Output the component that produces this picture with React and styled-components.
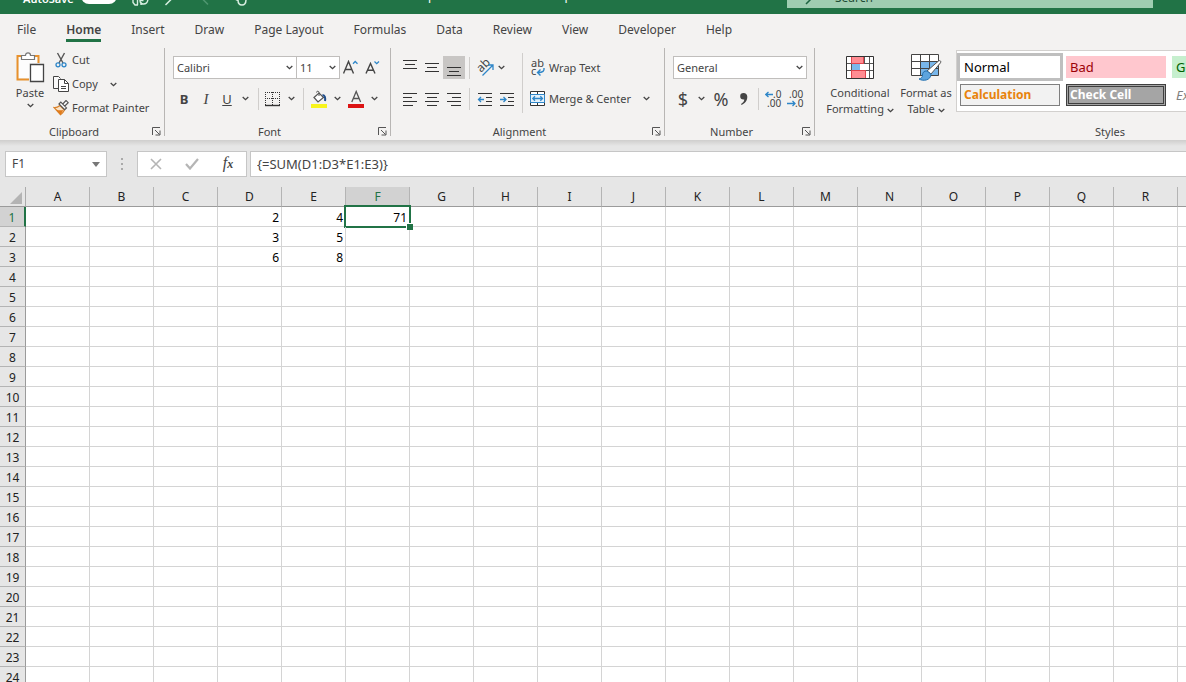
import React from "react";
import styled, { createGlobalStyle, css } from "styled-components";

const tabs = ["File", "Home", "Insert", "Draw", "Page Layout", "Formulas", "Data", "Review", "View", "Developer", "Help"];
const columns = "ABCDEFGHIJKLMNOPQRS".split("");
const rows = Array.from({ length: 24 }, (_, i) => i + 1);
const cells = { D1: 2, E1: 4, F1: 71, D2: 3, E2: 5, D3: 6, E3: 8 };
const active = { col: "F", row: 1 };

const Chevron = () => (
    <ChevronSvg width="7" height="5" viewBox="0 0 7 5">
        <path d="M.7 1l2.800 2.700L6.300 1" fill="none" stroke="#444" strokeWidth="1.300" />
    </ChevronSvg>
)

const PasteIcon = () => (
    <svg width="30" height="32" viewBox="0 0 30 32" fill="none">
        <path d="M8 5H2.5v23.500H14M18 5h5.500v7" stroke="#e8912d" strokeWidth="2" />
        <path d="M4 6.500h18V12H14v15H4z" fill="#fdfdfd" />
        <path d="M6.500 8.500v-4h4C10.500 1 15.500 1 15.500 4.500h4v4z" fill="#fff" stroke="#777" strokeWidth="1.200" />
        <path d="M15.500 13.500h13v17h-13z" fill="#fff" stroke="#444" strokeWidth="1.300" />
    </svg>
)

const CutIcon = () => (
    <svg width="16" height="16" viewBox="0 0 16 16" fill="none">
        <path d="M4.500 1l5.500 10M11.500 1L6 11" stroke="#555" strokeWidth="1.400" />
        <circle cx="5" cy="12.800" r="2" stroke="#2e86c8" strokeWidth="1.300" />
        <circle cx="11" cy="12.800" r="2" stroke="#2e86c8" strokeWidth="1.300" />
    </svg>
)

const CopyIcon = () => (
    <svg width="16" height="16" viewBox="0 0 16 16" fill="#fff" stroke="#444">
        <path d="M5 12.500H.5V.5h5l2 2" fill="#fafafa" />
        <path d="M5.500 3.500h6l4 4v8h-10z" />
        <path d="M11.500 3.500v4h4M8 10.500h5M8 12.500h5" fill="none" />
    </svg>
)

const PainterIcon = () => (
    <svg width="16" height="16" viewBox="0 0 16 16" fill="none">
        <path d="M1 7.500c2 .3 4-.5 6-2l4.500 4.500c-1 2-2 3.500-4 4.700z" fill="#fbe3c5" stroke="#d9822b" strokeWidth="1.200" />
        <path d="M3 9.500c3 1 5.500 1 7.500.5l-3 4.700z" fill="#e07b1c" />
        <path d="M6 4l1.800-1.800 5.700 5.700-1.800 1.800zM9.800 4l3.200-3.500 2.200 2.200L11.800 6" fill="#fff" stroke="#555" strokeWidth="1.200" />
    </svg>
)

const GrowIcon = ({ shrink }) => (
    <svg width="16" height="16" viewBox="0 0 16 16" fill="none">
        <path d={shrink ? "M1 13.500L5.500 3.500 10 13.500M2.800 10.200h5.400" : "M.5 13.500L5.500 1.500 10.500 13.500M2.300 9.500h6.400"} stroke="#444" strokeWidth="1.400" />
        <path d={shrink ? "M9.500 1.500l2.200 2.200L14 1.500" : "M10 3.700L12.200 1.500 14.500 3.700"} stroke="#2e86c8" strokeWidth="1.300" />
    </svg>
)

const BordersIcon = () => (
    <svg width="16" height="16" viewBox="0 0 16 16" fill="none" stroke="#333">
        <path d="M0 1.500h15M.5 1v13M14.500 1v13M7.500 1v13M0 7.500h15" strokeDasharray="1 1" />
        <path d="M0 14.500h15" strokeWidth="1.400" />
    </svg>
)

const FillIcon = () => (
    <svg width="16" height="18" viewBox="0 0 16 18" fill="none">
        <path d="M3 7.500L8 3l4.500 4.500L7 12z" fill="#fff" stroke="#555" strokeWidth="1.200" />
        <path d="M8 6V2.500C8 .8 5.500.8 5.500 2.500" stroke="#555" />
        <path d="M11.500 5c2.500 0 3 3 2.500 6" stroke="#1f4e8c" strokeWidth="2" />
        <path d="M0 14h16v4H0z" fill="#f8f41c" />
    </svg>
)

const FontColorIcon = () => (
    <svg width="16" height="18" viewBox="0 0 16 18" fill="none">
        <path d="M3.800 12L8.200 1.500l4.400 10.500M5.500 8.500h5.400" stroke="#555" strokeWidth="1.300" />
        <path d="M0 14h16v4H0z" fill="#dc1414" />
    </svg>
)

// each entry is [x, width] of one text line
const linePatterns = {
    vertical: [[1, 14], [3, 10], [1, 14]],
    left: [[1, 14], [1, 9], [1, 14], [1, 10]],
    center: [[1, 14], [3, 10], [1, 14], [3, 10]],
    right: [[1, 14], [6, 9], [1, 14], [5, 10]]
}

const LinesIcon = ({ kind, top = 2 }) => (
    <svg width="16" height="16" viewBox="0 0 16 16" fill="#333">
        {linePatterns[kind].map(([x, w], i) => <rect key={i} x={x} y={top + i * 4} width={w} height="1" />)}
    </svg>
)

const IndentIcon = ({ increase }) => (
    <svg width="16" height="16" viewBox="0 0 16 16" fill="none">
        <path d="M1 2.500h14M9 6.500h6M9 10.500h6M1 14.500h14" stroke="#333" />
        <path d={increase ? "M1 8.500h6M4.500 6L7 8.500 4.500 11" : "M7 8.500H1.500M4 6L1.500 8.500 4 11"} stroke="#2e86c8" strokeWidth="1.300" />
    </svg>
)

const OrientationIcon = () => (
    <svg width="18" height="18" viewBox="0 0 18 18" fill="none">
        <text x="0" y="0" transform="translate(5 14) rotate(-45)" fontSize="12" fill="#444" fontFamily="Noto Sans, sans-serif">ab</text>
        <path d="M6.500 16.500L16.500 6.500M12 6h5v5" stroke="#2e86c8" strokeWidth="1.300" />
    </svg>
)

const WrapIcon = () => (
    <svg width="16" height="18" viewBox="0 0 16 18" fill="none">
        <text x="1" y="8" fontSize="11" fill="#444" fontFamily="Noto Sans, sans-serif">ab</text>
        <text x="1" y="16" fontSize="11" fill="#444" fontFamily="Noto Sans, sans-serif">c</text>
        <path d="M14 9c.5 3-1 4.500-6 4.500M10.500 10.500l-3 3 3 3" stroke="#2e86c8" strokeWidth="1.400" />
    </svg>
)

const MergeIcon = () => (
    <svg width="16" height="16" viewBox="0 0 16 16" fill="none">
        <path d="M.5.5h14v14H.5zM7.500.5v3M7.500 11.500v3" fill="#fff" stroke="#333" />
        <path d="M.5 3.500h14v8H.5z" fill="#e4f1fb" stroke="#2e86c8" />
        <path d="M3 7.500h9.500M5 5.200L2.800 7.500 5 9.800M10.300 5.200l2.200 2.300-2.200 2.300" stroke="#2e86c8" strokeWidth="1.300" />
    </svg>
)

const DecimalIcon = ({ decrease }) => (
    <svg width="17" height="18" viewBox="0 0 17 18" fill="none">
        <text x={decrease ? 2 : 8} y="8" fontSize="10" fill="#444" fontFamily="Noto Sans, sans-serif">{decrease ? ".00" : ".0"}</text>
        <text x={decrease ? 8 : 2} y="17" fontSize="10" fill="#444" fontFamily="Noto Sans, sans-serif">{decrease ? ".0" : ".00"}</text>
        <path
            d={decrease ? "M0 13.500h8M5.500 11L8 13.500 5.500 16" : "M8 4.500H.8M3.500 2L.8 4.500 3.500 7"}
            stroke="#2e86c8"
            strokeWidth="1.300"
        />
    </svg>
)

const ConditionalIcon = () => (
    <svg width="28" height="24" viewBox="0 0 28 24">
        <path d="M.5.5h27v22H.5z" fill="#fff" />
        <path d="M5.500.5v22M18.500.5v22M23.500.5v22M.5 7.500h27M.5 14.500h27" fill="none" stroke="#555" />
        <path d="M5.500.5h12v7h-12zM5.500 14.500h14v8h-14z" fill="#ff8c92" stroke="#e0444c" />
        <path d="M14.500 8h8.500v6h-8.500z" fill="#fff" />
        <path d="M6 8h8v6H6z" fill="#7ab8ea" />
        <path d="M.5.5h27v22H.5z" fill="none" stroke="#333" />
    </svg>
)

const TableIcon = () => (
    <svg width="32" height="28" viewBox="0 0 32 28">
        <path d="M1.500.5h27v21h-27z" fill="#fff" />
        <path d="M10 7.500h19v14H10z" fill="#78b6ea" />
        <path d="M1.500 21.500V.5h27v21zM10.500.5v21M19.500.5v21M1.500 7.500h27M1.500 14.500h27" fill="none" stroke="#444" />
        <path d="M17 17L28.500 7c1.500-1 3 .3 2 1.800L21 20z" fill="#fff" stroke="#555" />
        <path d="M17 17c-3-.5-4.500 1.500-4.500 4 0 2.500-1.500 3.500-3.500 4 4 2.500 12 1.500 12-5z" fill="#5da4de" stroke="#2672b0" />
    </svg>
)

const LauncherIcon = () => (
    <svg width="9" height="9" viewBox="0 0 9 9" fill="none" stroke="#555">
        <path d="M.5 8V.5H8M3 3l4.500 4.500M8 3.500V8H3.500" />
    </svg>
)

const TitleBar = () => (
    <TitleStrip>
        <AutoSave>
            AutoSave
            <Toggle type="checkbox" role="switch" />
        </AutoSave>
        <QuickButton aria-label="Save">
            <svg width="18" height="20" viewBox="0 0 18 20" fill="none" stroke="#d8efe1" strokeWidth="1.400">
                <path d="M1 2v14.500l2 2.500h3M5.500 13v6M16 12c0 4-2 6-4.500 6S8 16.500 8 14.500h3.500M9 19v-3M11 12.500h5" />
            </svg>
        </QuickButton>
        <QuickButton aria-label="Draw line">
            <svg width="10" height="20" viewBox="0 0 10 20" fill="none" stroke="#d8efe1" strokeWidth="1.500">
                <path d="M1.500 19L8 12.500" />
            </svg>
        </QuickButton>
        <QuickButton aria-label="Redo">
            <svg width="10" height="20" viewBox="0 0 10 20" fill="none" stroke="#4f9670" strokeWidth="1.500">
                <path d="M1.500 12L8 18.500" />
            </svg>
        </QuickButton>
        <QuickButton aria-label="Touch mode">
            <svg width="14" height="20" viewBox="0 0 14 20" fill="none" stroke="#d8efe1" strokeWidth="1.500">
                <path d="M1 13l3 1.500M4 14c0 3 1.500 5 4 5s4-2 4-5.500L8 11" />
            </svg>
        </QuickButton>
        <FileName><span>p</span><span>p</span></FileName>
        <SearchBox>
            <svg width="12" height="20" viewBox="0 0 12 20" fill="none" stroke="#1d6340" strokeWidth="1.500">
                <path d="M1 18l6-6" />
                <circle cx="9" cy="9" r="3" />
            </svg>
            <SearchInput type="search" placeholder="Search" aria-label="Search" />
        </SearchBox>
    </TitleStrip>
)

const Group = ({ name, width, launcher = true, children }) => (
    <GroupBox $width={width}>
        <GroupBody>{children}</GroupBody>
        <GroupFooter $launcher={launcher}>
            {name}
            {launcher && <Launcher aria-label={`${name} settings`}><LauncherIcon /></Launcher>}
        </GroupFooter>
    </GroupBox>
)

const DropDown = ({ label, value, width }) => (
    <SelectBox $width={width}>
        <Select aria-label={label} defaultValue={value}>
            <option>{value}</option>
        </Select>
        <Chevron />
    </SelectBox>
)

const MoreButton = ({ label, width = 20 }) => (
    <ToolButton $width={width} aria-label={label}><Chevron /></ToolButton>
)

const Ribbon = () => (
    <RibbonPanel>
        <Group name="Clipboard" width={164}>
            <Clipboard>
                <PasteButton>
                    <PasteIcon />
                    Paste
                    <Chevron />
                </PasteButton>
                <Stack>
                    <TextButton><CutIcon />Cut</TextButton>
                    <TextButton><CopyIcon />Copy<ChevronGap $wide><Chevron /></ChevronGap></TextButton>
                    <TextButton><PainterIcon />Format Painter</TextButton>
                </Stack>
            </Clipboard>
        </Group>
        <GroupLine />
        <Group name="Font" width={225}>
            <Tools>
                <ToolRow $left={8}>
                    <DropDown label="Font" value="Calibri" width={124} />
                    <DropDown label="Font size" value="11" width={43} />
                    <ToolButton $width={22} aria-label="Increase font size"><GrowIcon /></ToolButton>
                    <ToolButton $width={22} aria-label="Decrease font size"><GrowIcon shrink /></ToolButton>
                </ToolRow>
                <ToolRow $left={8}>
                    <ToolButton $width={22} aria-label="Bold"><b>B</b></ToolButton>
                    <ToolButton $width={22} aria-label="Italic"><SerifItalic>I</SerifItalic></ToolButton>
                    <ToolButton $width={20} aria-label="Underline"><u>U</u></ToolButton>
                    <MoreButton label="Underline styles" width={16} />
                    <ToolLine />
                    <ToolButton $width={22} aria-label="Borders"><BordersIcon /></ToolButton>
                    <MoreButton label="Border styles" width={14} />
                    <ToolLine />
                    <ToolButton $width={24} aria-label="Fill colour"><FillIcon /></ToolButton>
                    <MoreButton label="Fill colours" width={12} />
                    <ToolButton $width={26} aria-label="Font colour"><FontColorIcon /></ToolButton>
                    <MoreButton label="Font colours" width={10} />
                </ToolRow>
            </Tools>
        </Group>
        <GroupLine />
        <Group name="Alignment" width={273}>
            <Tools>
                <ToolRow $left={8}>
                    <ToolButton $width={22} aria-label="Top align"><LinesIcon kind="vertical" top={0} /></ToolButton>
                    <ToolButton $width={22} aria-label="Middle align"><LinesIcon kind="vertical" top={3} /></ToolButton>
                    <ToolButton $width={22} $pressed aria-label="Bottom align"><LinesIcon kind="vertical" top={7} /></ToolButton>
                    <ToolLine $tight />
                    <ToolButton $width={22} aria-label="Orientation"><OrientationIcon /></ToolButton>
                    <MoreButton label="Orientations" width={10} />
                </ToolRow>
                <ToolRow $left={8}>
                    <ToolButton $width={22} aria-label="Align left"><LinesIcon kind="left" /></ToolButton>
                    <ToolButton $width={22} aria-label="Centre"><LinesIcon kind="center" /></ToolButton>
                    <ToolButton $width={22} aria-label="Align right"><LinesIcon kind="right" /></ToolButton>
                    <ToolLine $tight />
                    <ToolButton $width={22} aria-label="Decrease indent"><IndentIcon /></ToolButton>
                    <ToolButton $width={22} aria-label="Increase indent"><IndentIcon increase /></ToolButton>
                </ToolRow>
            </Tools>
            <TallLine />
            <Tools>
                <ToolRow $left={7}>
                    <TextButton><WrapIcon />Wrap Text</TextButton>
                </ToolRow>
                <ToolRow $left={7}>
                    <TextButton><MergeIcon />Merge &amp; Center<ChevronGap $wide><Chevron /></ChevronGap></TextButton>
                </ToolRow>
            </Tools>
        </Group>
        <GroupLine />
        <Group name="Number" width={149}>
            <Tools>
                <ToolRow $left={8}>
                    <DropDown label="Number format" value="General" width={134} />
                </ToolRow>
                <ToolRow $left={8}>
                    <ToolButton $width={20} $size={18} aria-label="Currency">$</ToolButton>
                    <MoreButton label="Currencies" width={16} />
                    <ToolButton $width={24} $size={18} aria-label="Percent">%</ToolButton>
                    <ToolButton $width={20} aria-label="Comma style">
                        <svg width="9" height="14" viewBox="0 0 9 14" fill="#444">
                            <path d="M4.500 1a3.300 3.300 0 1 0 0 6.600h.8c-.2 2-1.300 3.300-3.300 4.400l.6 1C6 11.500 8.300 8.700 8.300 4.800 8.300 2.500 6.800 1 4.500 1z" />
                        </svg>
                    </ToolButton>
                    <ToolLine />
                    <ToolButton $width={22} aria-label="Increase decimal"><DecimalIcon /></ToolButton>
                    <ToolButton $width={22} aria-label="Decrease decimal"><DecimalIcon decrease /></ToolButton>
                </ToolRow>
            </Tools>
        </Group>
        <GroupLine />
        <Group name="Styles" width={590} launcher={false}>
            <BigButton $width={76}>
                <ConditionalIcon />
                <span>Conditional<br />Formatting <Chevron /></span>
            </BigButton>
            <BigButton $width={56}>
                <TableIcon />
                <span>Format as<br />Table <Chevron /></span>
            </BigButton>
            <Gallery>
                <StyleButton $kind="normal">Normal</StyleButton>
                <StyleButton $kind="bad">Bad</StyleButton>
                <StyleButton $kind="good">Good</StyleButton>
                <StyleButton $kind="calculation">Calculation</StyleButton>
                <StyleButton $kind="check">Check Cell</StyleButton>
                <StyleButton $kind="note">Explanatory</StyleButton>
            </Gallery>
        </Group>
    </RibbonPanel>
)

const FormulaBar = () => (
    <FormulaStrip>
        <NameBox>
            <PlainInput aria-label="Name box" defaultValue="F1" />
            <svg width="8" height="5" viewBox="0 0 8 5"><path d="M0 0h8L4 5z" fill="#777" /></svg>
        </NameBox>
        <svg width="3" height="14" viewBox="0 0 3 14" fill="#aaa">
            <path d="M0 1h2v2H0zM0 6h2v2H0zM0 11h2v2H0z" />
        </svg>
        <FormulaButtons>
            <ToolButton $width={36} aria-label="Cancel">
                <svg width="12" height="12" viewBox="0 0 12 12"><path d="M1 1l10 10M11 1L1 11" stroke="#b5b5b5" strokeWidth="1.600" /></svg>
            </ToolButton>
            <ToolButton $width={36} aria-label="Enter">
                <svg width="14" height="12" viewBox="0 0 14 12"><path d="M1 6l4 4.500L13 1" fill="none" stroke="#b5b5b5" strokeWidth="2.200" /></svg>
            </ToolButton>
            <ToolButton $width={36} aria-label="Insert function"><Fx>f<small>x</small></Fx></ToolButton>
        </FormulaButtons>
        <FormulaInput aria-label="Formula" defaultValue="{=SUM(D1:D3*E1:E3)}" />
    </FormulaStrip>
)

const Sheet = () => (
    <SheetArea>
        <Grid>
            <colgroup>
                <RowCol />
                {columns.map(col => <DataCol key={col} />)}
            </colgroup>
            <thead>
                <tr>
                    <Corner aria-label="Select all">
                        <svg width="12" height="12" viewBox="0 0 12 12"><path d="M12 0v12H0z" fill="#b4b4b4" /></svg>
                    </Corner>
                    {columns.map(col => <ColHead key={col} scope="col" $active={col === active.col}>{col}</ColHead>)}
                </tr>
            </thead>
            <tbody>
                {rows.map(row => (
                    <tr key={row}>
                        <RowHead scope="row" $active={row === active.row}>{row}</RowHead>
                        {columns.map(col => (
                            <Cell key={col} $active={col === active.col && row === active.row}>{cells[col + row]}</Cell>
                        ))}
                    </tr>
                ))}
            </tbody>
        </Grid>
    </SheetArea>
)

export default function App() {
    return (
        <Window>
            <GlobalStyle />
            <TitleBar />
            <TabBar>
                {tabs.map(tab => <Tab key={tab} href="#" $active={tab === "Home"}>{tab}</Tab>)}
            </TabBar>
            <Ribbon />
            <FormulaBar />
            <Sheet />
        </Window>
    )
}


const GlobalStyle = createGlobalStyle`
* {
    box-sizing:border-box;
}
body {
    margin:0;
    overflow:hidden;
    background:#e6e6e6;
}
button, input, select {
    font:inherit;
    color:inherit;
    margin:0;
    padding:0;
    border:0;
    background:none;
}
svg {
    flex:none;
}
`

const Window = styled.div`
height:100vh;
display:flex;
flex-direction:column;
overflow:hidden;
font-family:"Noto Sans", "Open Sans", sans-serif;
font-size:12px;
line-height:16px;
color:#444;
`

const TitleStrip = styled.header`
flex:none;
height:36px;
margin-top:-22px;
padding:0 33px 0 23px;
display:flex;
align-items:center;
background:#217346;
color:#fff;
`

const AutoSave = styled.label`
display:flex;
align-items:flex-start;
justify-content:space-between;
width:94px;
height:16px;
margin-right:14px;
font-weight:600;
font-size:11px;
line-height:22px;
`

const Toggle = styled.input`
flex:none;
appearance:none;
width:36px;
height:16px;
border-radius:8px;
&& {
    background:#fff;
}
`

const QuickButton = styled.button`
display:flex;
justify-content:center;
width:36px;
&:first-of-type {
    width:20px;
}
`

const FileName = styled.div`
display:flex;
justify-content:space-between;
width:144px;
margin-left:auto;
margin-right:215px;
`

const SearchBox = styled.div`
display:flex;
align-items:center;
gap:18px;
width:366px;
height:24px;
padding-left:18px;
background:#9fcdb1;
color:#1d4a33;
`

const SearchInput = styled.input`
flex:1;
min-width:0;
&& {
    padding-top:4px;
}
&::placeholder {
    color:#1d4a33;
    opacity:1;
}
`

const TabBar = styled.nav`
flex:none;
display:flex;
gap:30px;
height:32px;
padding:0 17px;
background:#f3f2f1;
`

const Tab = styled.a`
height:28px;
line-height:31px;
font-size:12px;
color:#444;
text-decoration:none;
white-space:nowrap;
${props => props.$active && css`
    font-weight:600;
    box-shadow:inset 0 -3px #217346;
`}
`

const RibbonPanel = styled.section`
flex:none;
display:flex;
height:94px;
overflow:hidden;
background:#f3f2f1;
font-size:11px;
`

const GroupBox = styled.div`
flex:none;
display:flex;
flex-direction:column;
width:${props => props.$width}px;
padding-top:2px;
`

const GroupBody = styled.div`
flex:1;
display:flex;
align-items:flex-start;
`

const GroupFooter = styled.div`
display:flex;
align-items:center;
justify-content:center;
position:relative;
height:16px;
padding-right:${props => props.$launcher ? 16 : 0}px;
`

const Launcher = styled.button`
position:absolute;
right:3px;
top:3px;
display:flex;
`

const GroupLine = styled.div`
flex:none;
width:1px;
margin:2px 0 4px;
background:#b8b6b4;
`

const ChevronSvg = styled.svg`
display:inline-block;
vertical-align:middle;
`

const ChevronGap = styled.span`
display:flex;
margin-left:${props => props.$wide ? 9 : 6}px;
`

const Clipboard = styled.div`
display:flex;
gap:7px;
padding-left:14px;
`

const PasteButton = styled.button`
display:flex;
flex-direction:column;
align-items:center;
width:32px;
padding-top:3px;
gap:2px;
`

const Stack = styled.div`
display:flex;
flex-direction:column;
align-items:flex-start;
`

const TextButton = styled.button`
display:flex;
align-items:center;
gap:3px;
height:24px;
white-space:nowrap;
`

const Tools = styled.div`
flex:none;
display:flex;
flex-direction:column;
gap:8px;
padding-top:8px;
`

const ToolRow = styled.div`
display:flex;
align-items:center;
height:23px;
padding-left:${props => props.$left}px;
`

const ToolButton = styled.button`
display:flex;
align-items:center;
justify-content:center;
width:${props => props.$width}px;
height:23px;
&& {
    font-size:${props => props.$size || 13}px;
    ${props => props.$pressed && css`background:#c8c6c4;`}
}
`

const SerifItalic = styled.i`
font-family:"Liberation Serif", serif;
font-size:15px;
`

const ToolLine = styled.div`
width:1px;
height:22px;
margin:0 ${props => props.$tight ? 4 : 3}px 0 ${props => props.$tight ? 4 : 5}px;
background:#d0cecc;
`

const TallLine = styled.div`
flex:none;
width:1px;
height:60px;
margin:5px 0 0 4px;
background:#d0cecc;
`

const SelectBox = styled.div`
display:flex;
align-items:center;
position:relative;
width:${props => props.$width}px;
height:23px;
border:1px solid #c0bebc;
background:#fff;
& + & {
    border-left:0;
}
svg {
    position:absolute;
    right:3px;
    pointer-events:none;
}
`

const Select = styled.select`
&& {
    appearance:none;
    width:100%;
    height:100%;
    padding-left:3px;
}
`

const BigButton = styled.button`
display:flex;
flex-direction:column;
align-items:center;
width:${props => props.$width}px;
margin-left:7px;
white-space:nowrap;
&& {
    padding-top:6px;
}
& + & {
    margin-left:0;
}
svg:first-child {
    height:28px;
}
span {
    padding-top:3px;
}
span svg:last-child {
    height:5px;
}
`

const Gallery = styled.div`
flex:1;
display:grid;
grid-template-columns:repeat(3, 100px);
grid-auto-rows:22px;
gap:6px;
height:62px;
margin:2px 0 0 2px;
padding:5px 3px;
border:1px solid #d2d0ce;
background:#fff;
`

const styleKinds = {
    normal: css`background:#fff; color:#000; outline:3px solid #bfbfbf;`,
    bad: css`background:#ffc7ce; color:#9c0006;`,
    good: css`background:#c6efce; color:#006100;`,
    calculation: css`background:#f2f2f2; color:#e8830c; border:1px solid #7f7f7f; font-weight:700; font-size:12px; padding-left:3px;`,
    check: css`background:#a5a5a5; color:#fff; border:3px double #3f3f3f; font-weight:700; font-size:12px; padding-left:1px;`,
    note: css`color:#7f7f7f; font-style:italic;`
}

const StyleButton = styled.button`
&& {
    display:flex;
    align-items:center;
    padding-left:4px;
    font-size:13px;
    ${props => styleKinds[props.$kind]}
}
`

const FormulaStrip = styled.div`
flex:none;
display:flex;
align-items:center;
height:47px;
padding:11px 0 10px 5px;
background:linear-gradient(#cfcecd, #e6e6e6 6px);
`

const NameBox = styled.div`
display:flex;
align-items:center;
width:102px;
height:26px;
margin-right:14px;
padding:0 6px;
border:1px solid #c6c6c6;
background:#fff;
`

const PlainInput = styled.input`
flex:1;
min-width:0;
`

const FormulaButtons = styled.div`
display:flex;
width:110px;
height:26px;
margin:0 3px 0 13px;
border:1px solid #c6c6c6;
background:#fff;
`

const Fx = styled.i`
font-family:"Liberation Serif", serif;
font-size:16px;
small {
    font-size:12px;
    font-weight:700;
}
`

const FormulaInput = styled.input`
&& {
    flex:1;
    min-width:0;
    height:26px;
    padding-left:6px;
    border:1px solid #c6c6c6;
    border-right:0;
    background:#fff;
    font-size:13px;
}
`

const SheetArea = styled.main`
flex:1;
min-height:0;
overflow:hidden;
background:#fff;
`

const Grid = styled.table`
table-layout:fixed;
width:0;
border-collapse:separate;
border-spacing:0;
font-size:12px;
color:#000;
`

const RowCol = styled.col`
width:26px;
`

const DataCol = styled.col`
width:64px;
`

const headCell = css`
height:20px;
padding:0;
line-height:18px;
font-weight:400;
text-align:center;
background:${props => props.$active ? "#d2d2d2" : "#e6e6e6"};
color:${props => props.$active ? "#217346" : "#222"};
`

const Corner = styled.td`
${headCell}
border-right:1px solid #ababab;
border-bottom:1px solid #9b9b9b;
svg {
    display:block;
    margin:3px 3px 0 auto;
}
`

const ColHead = styled.th`
${headCell}
border-right:1px solid #b4b4b4;
border-bottom:1px solid ${props => props.$active ? "#217346" : "#9b9b9b"};
`

const RowHead = styled.th`
${headCell}
padding-top:3px;
line-height:16px;
border-right:${props => props.$active ? "2px solid #217346" : "1px solid #9b9b9b"};
border-bottom:1px solid #b4b4b4;
`

const Cell = styled.td`
position:relative;
height:20px;
padding:3px 2px 0 0;
line-height:16px;
text-align:right;
border-right:1px solid #d4d4d4;
border-bottom:1px solid #d4d4d4;
${props => props.$active && css`
    &::before {
        content:"";
        position:absolute;
        inset:-2px;
        border:2px solid #217346;
    }
    &::after {
        content:"";
        position:absolute;
        right:-4px;
        bottom:-4px;
        width:6px;
        height:6px;
        border:1px solid #fff;
        border-width:1px 0 0 1px;
        background:#217346;
        z-index:1;
    }
`}
`
